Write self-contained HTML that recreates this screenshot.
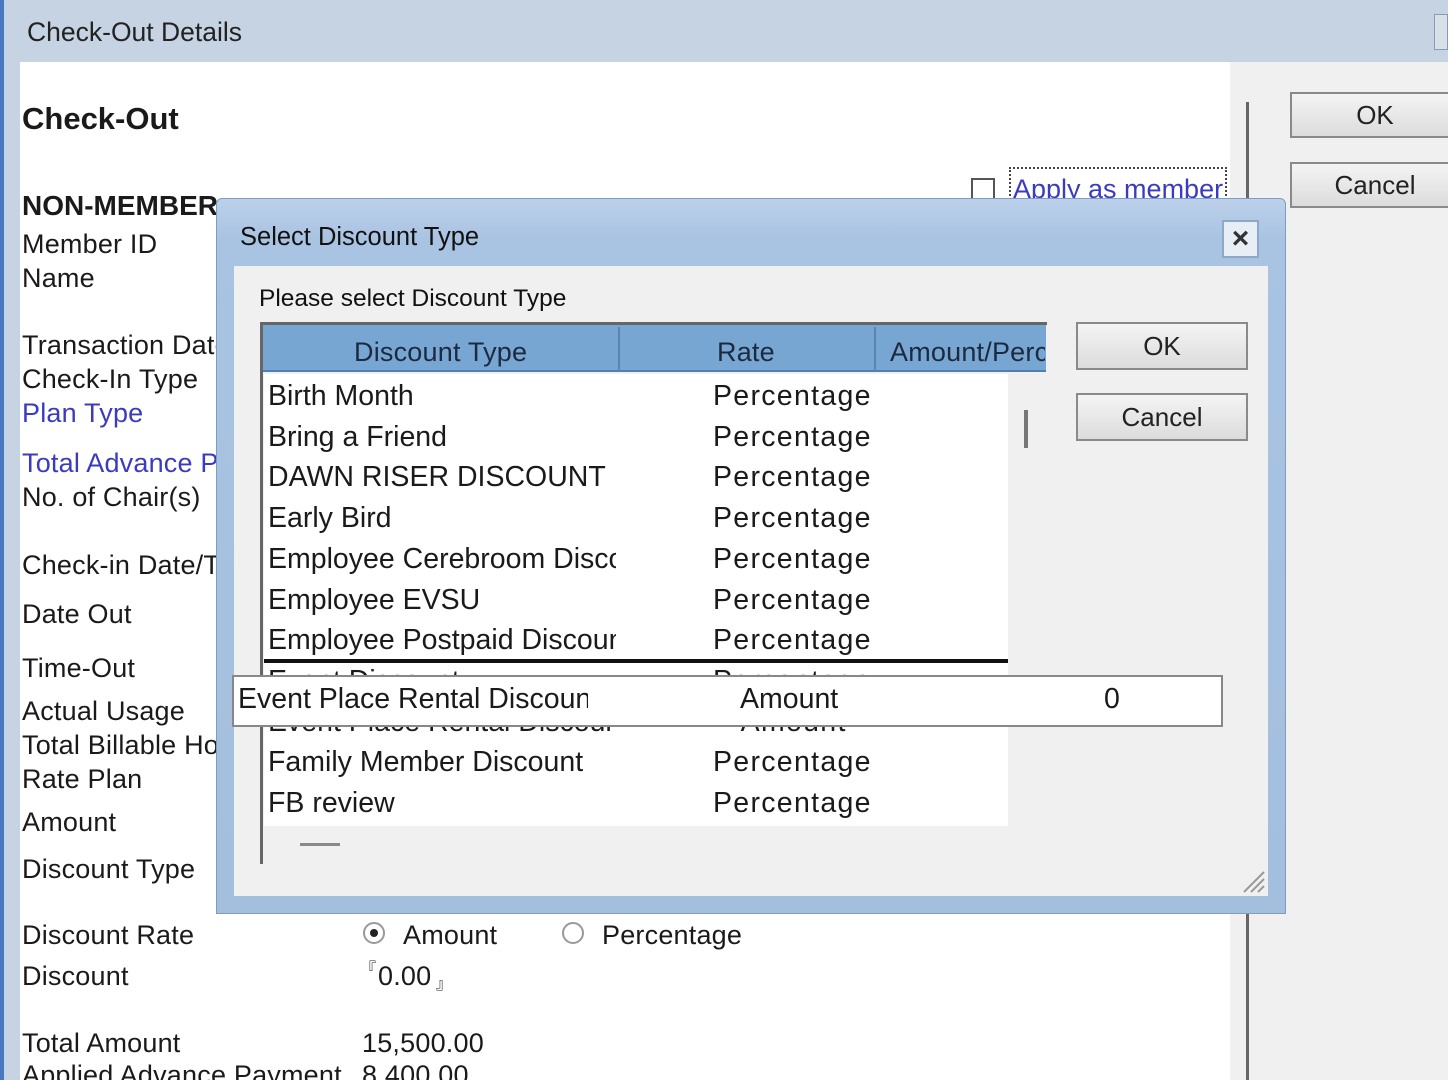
<!DOCTYPE html>
<html><head><meta charset="utf-8"><style>
*{margin:0;padding:0;box-sizing:border-box}
html,body{width:1448px;height:1080px;overflow:hidden}
body{position:relative;background:#c5d3e3;font-family:"Liberation Sans",sans-serif;color:#1a1a1a}
.a{position:absolute;white-space:nowrap}
.l{font-size:27px;line-height:30px;letter-spacing:0.2px}
.btn{position:absolute;background:linear-gradient(#f4f4f4,#dcdcdc);border:2px solid #8a8a8a;font-size:26px;text-align:center;color:#222}
</style></head><body>
<div class="a" style="left:0;top:0;width:4px;height:1080px;background:#4a78c0"></div>
<div class="a" style="left:27px;top:17px;font-size:26.5px;color:#222">Check-Out Details</div>
<div class="a" style="left:1434px;top:14px;width:14px;height:36px;border:1px solid #8a9ab0;background:#d8e0ea"></div>
<div class="a" style="left:20px;top:62px;width:1210px;height:1018px;background:#fff"></div>
<div class="a" style="left:1230px;top:62px;width:218px;height:1018px;background:#f0f0f0"></div>
<div class="a" style="left:1246px;top:102px;width:3px;height:978px;background:#666"></div>
<div class="btn" style="left:1290px;top:92px;width:170px;height:46px;line-height:42px">OK</div>
<div class="btn" style="left:1290px;top:162px;width:170px;height:46px;line-height:42px">Cancel</div>

<div class="a" style="left:22px;top:101px;font-size:31px;font-weight:bold">Check-Out</div>
<div class="a" style="left:22px;top:190px;font-size:28px;font-weight:bold">NON-MEMBER</div>
<div class="a" style="left:971px;top:178px;width:24px;height:24px;border:2px solid #555;background:#fff"></div>
<div class="a" style="left:1009px;top:167px;width:218px;height:36px;border:2px dotted #444;overflow:hidden;padding-left:2px;font-size:27px;color:#3b3bc0;line-height:40px">Apply as member</div>

<div class="a l" style="left:22px;top:229px">Member ID</div>
<div class="a l" style="left:22px;top:263px">Name</div>
<div class="a l" style="left:22px;top:330px">Transaction Date</div>
<div class="a l" style="left:22px;top:364px">Check-In Type</div>
<div class="a l" style="left:22px;top:398px;color:#3b3bc0">Plan Type</div>
<div class="a l" style="left:22px;top:448px;color:#3b3bc0">Total Advance Payment</div>
<div class="a l" style="left:22px;top:482px">No. of Chair(s)</div>
<div class="a l" style="left:22px;top:550px">Check-in Date/Time</div>
<div class="a l" style="left:22px;top:599px">Date Out</div>
<div class="a l" style="left:22px;top:653px">Time-Out</div>
<div class="a l" style="left:22px;top:696px">Actual Usage</div>
<div class="a l" style="left:22px;top:730px">Total Billable Hours</div>
<div class="a l" style="left:22px;top:764px">Rate Plan</div>
<div class="a l" style="left:22px;top:807px">Amount</div>
<div class="a l" style="left:22px;top:854px">Discount Type</div>
<div class="a l" style="left:22px;top:920px">Discount Rate</div>
<div class="a l" style="left:22px;top:961px">Discount</div>
<div class="a l" style="left:22px;top:1028px">Total Amount</div>
<div class="a l" style="left:22px;top:1060px">Applied Advance Payment</div>

<div class="a" style="left:363px;top:922px;width:22px;height:22px;border-radius:50%;border:2px solid #999;background:#fff"><div style="position:absolute;left:5px;top:5px;width:8px;height:8px;border-radius:50%;background:#222"></div></div>
<div class="a l" style="left:403px;top:920px">Amount</div>
<div class="a" style="left:562px;top:922px;width:22px;height:22px;border-radius:50%;border:2px solid #999;background:#fff"></div>
<div class="a l" style="left:602px;top:920px">Percentage</div>
<div class="a" style="left:360px;top:955px;font-size:16px">&#x300E;</div>
<div class="a l" style="left:378px;top:961px">0.00</div>
<div class="a" style="left:436px;top:970px;font-size:16px">&#x300F;</div>
<div class="a l" style="left:362px;top:1028px">15,500.00</div>
<div class="a l" style="left:362px;top:1060px">8,400.00</div>

<!-- dialog -->
<div class="a" style="left:216px;top:198px;width:1070px;height:716px;background:linear-gradient(#bcd1ea,#a9c3e2 40px,#a4bedd);border:1px solid #7f9cc2;border-radius:6px 6px 0 0"></div>
<div class="a" style="left:240px;top:223px;font-size:25.5px;color:#111">Select Discount Type</div>
<div class="a" style="left:1222px;top:220px;width:37px;height:38px;border:2px solid #8fa8c8;background:#e8eef6;text-align:center;font-size:30px;line-height:33px;color:#333;font-weight:bold">×</div>
<div class="a" style="left:234px;top:266px;width:1034px;height:630px;background:#f0f0f0"></div>
<div class="a" style="left:259px;top:285px;font-size:24.5px;color:#111">Please select Discount Type</div>
<div class="a" style="left:260px;top:322px;width:787px;height:542px;border-left:3px solid #666;border-top:3px solid #666;background:#f0f0f0"></div>
<div class="a" style="left:263px;top:325px;width:783px;height:47px;background:#78a6d3;border-bottom:2px solid #4f7fb0"></div>
<div class="a" style="left:618px;top:327px;width:2px;height:44px;background:#5a86b5"></div>
<div class="a" style="left:874px;top:327px;width:2px;height:44px;background:#5a86b5"></div>
<div class="a l" style="left:354px;top:337px;color:#1c2a40">Discount Type</div>
<div class="a l" style="left:717px;top:337px;color:#1c2a40">Rate</div>
<div class="a l" style="left:890px;top:337px;width:155px;overflow:hidden;color:#1c2a40">Amount/Percentage</div>
<div class="a" style="left:264px;top:374px;width:744px;height:452px;background:#fff"></div>
<div class="a" style="left:1024px;top:410px;width:4px;height:38px;background:#777"></div>
<div class="a" style="left:300px;top:843px;width:40px;height:3px;background:#888"></div>

<div style="position:absolute;left:268px;top:376px;font-size:28.5px;line-height:40.7px">
<div style="width:348px;overflow:hidden;white-space:nowrap">Birth Month</div>
<div style="width:348px;overflow:hidden;white-space:nowrap">Bring a Friend</div>
<div style="width:348px;overflow:hidden;white-space:nowrap">DAWN RISER DISCOUNT</div>
<div style="width:348px;overflow:hidden;white-space:nowrap">Early Bird</div>
<div style="width:348px;overflow:hidden;white-space:nowrap">Employee Cerebroom Discount</div>
<div style="width:348px;overflow:hidden;white-space:nowrap">Employee EVSU</div>
<div style="width:348px;overflow:hidden;white-space:nowrap">Employee Postpaid Discount</div>
<div style="width:348px;overflow:hidden;white-space:nowrap">Event Discount</div>
<div style="width:348px;overflow:hidden;white-space:nowrap">Event Place Rental Discount</div>
<div style="width:348px;overflow:hidden;white-space:nowrap">Family Member Discount</div>
<div style="width:348px;overflow:hidden;white-space:nowrap">FB review</div>
</div>
<div style="position:absolute;left:713px;top:376px;font-size:28.5px;line-height:40.7px;letter-spacing:1.3px">
<div>Percentage</div><div>Percentage</div><div>Percentage</div><div>Percentage</div><div>Percentage</div><div>Percentage</div><div>Percentage</div><div>Percentage</div><div>&nbsp;&nbsp;&nbsp;Amount</div><div>Percentage</div><div>Percentage</div>
</div>
<div class="a" style="left:264px;top:659px;width:744px;height:4px;background:#111"></div>
<div class="a" style="left:232px;top:675px;width:991px;height:52px;background:#fff;border:2px solid #888"></div>
<div class="a" style="left:238px;top:683px;width:350px;overflow:hidden;font-size:28.5px">Event Place Rental Discount</div>
<div class="a" style="left:740px;top:683px;font-size:28.5px">Amount</div>
<div class="a" style="left:1104px;top:683px;font-size:28.5px">0</div>

<div class="btn" style="left:1076px;top:322px;width:172px;height:48px;line-height:44px">OK</div>
<div class="btn" style="left:1076px;top:393px;width:172px;height:48px;line-height:44px">Cancel</div>
<svg class="a" style="left:1240px;top:868px" width="28" height="28"><path d="M4 24 L24 4 M11 24 L24 11 M18 24 L24 18" stroke="#999" stroke-width="2"/></svg>
</body></html>
